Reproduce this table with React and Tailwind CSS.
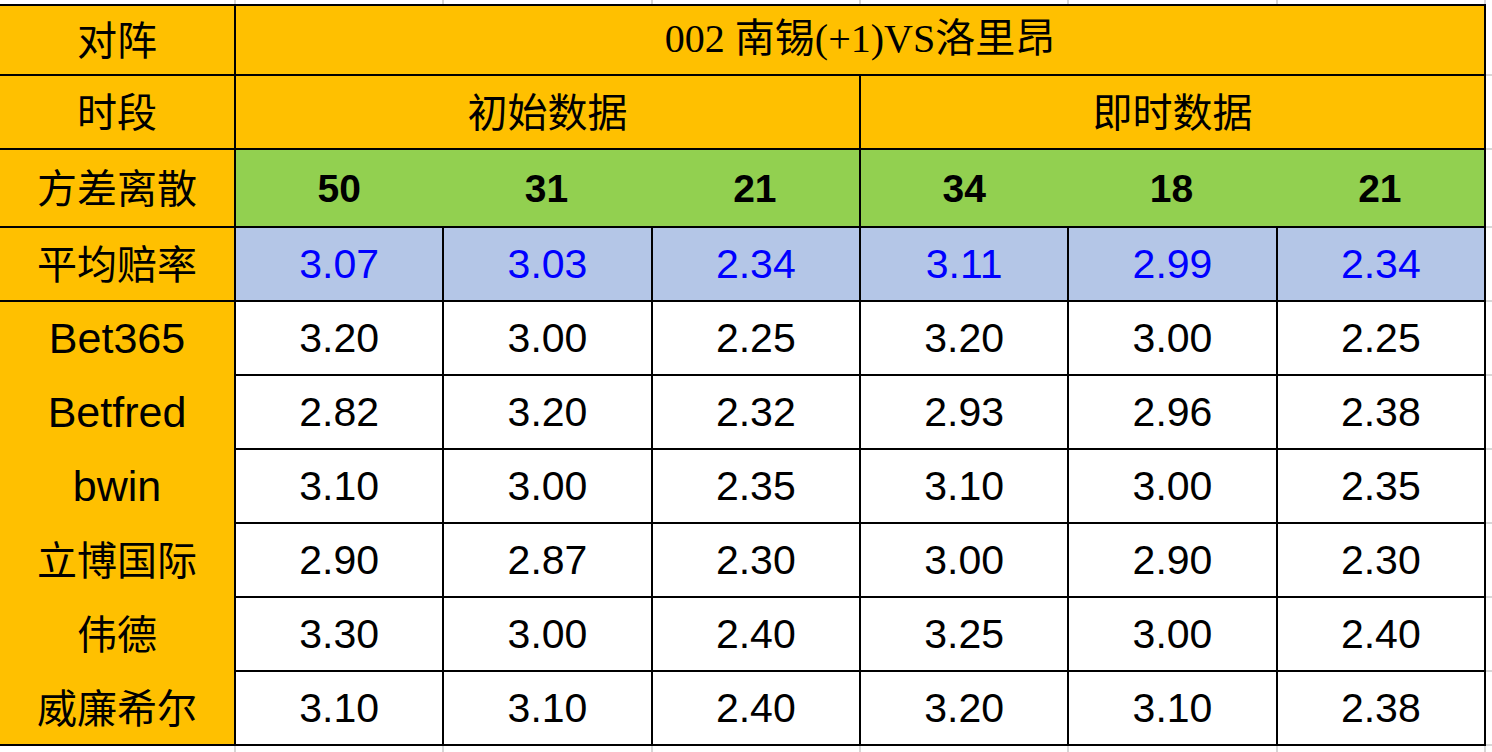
import React from 'react';

const grid = 'grid grid-cols-[234px_repeat(6,minmax(0,1fr))]';
const cjk = "font-['Noto_Sans_CJK_SC',sans-serif] pb-[5px]";
const num = "font-['Liberation_Sans','Noto_Sans_CJK_SC',sans-serif]";

const fangcha = ['50', '31', '21', '34', '18', '21'];
const pingjun = ['3.07', '3.03', '2.34', '3.11', '2.99', '2.34'];

const gongsi = [
    { ming: 'Bet365', latin: true, peilv: ['3.20', '3.00', '2.25', '3.20', '3.00', '2.25'] },
    { ming: 'Betfred', latin: true, peilv: ['2.82', '3.20', '2.32', '2.93', '2.96', '2.38'] },
    { ming: 'bwin', latin: true, peilv: ['3.10', '3.00', '2.35', '3.10', '3.00', '2.35'] },
    { ming: '立博国际', peilv: ['2.90', '2.87', '2.30', '3.00', '2.90', '2.30'] },
    { ming: '伟德', peilv: ['3.30', '3.00', '2.40', '3.25', '3.00', '2.40'] },
    { ming: '威廉希尔', peilv: ['3.10', '3.10', '2.40', '3.20', '3.10', '2.38'] },
];

// 右侧浅灰网格线的分段高度
const youce = [74, 74, 78, 74, 74, 74, 74, 74, 74, 74, 8];

const Biaoqian = ({ children, className = '', latin = false }) => (
    <div
        className={`flex items-center justify-center bg-[#ffc000] leading-none text-black ${latin ? `${num} text-[43px]` : `${cjk} text-[40px]`} ${className}`}
    >
        {children}
    </div>
);

const Wangge = ({ h }) => (
    <div className={`${grid} w-[1486px] border-r-2 border-[#d6d6d6] ${h}`}>
        <div />
        {[0, 1, 2, 3, 4, 5].map((i) => (
            <div key={i} className="border-l-2 border-[#d6d6d6]" />
        ))}
    </div>
);

const App = () => {
    return (
        <div className="flex h-[752px] w-[1492px] overflow-hidden bg-white">
            <div className="flex flex-col">
                <Wangge h="h-[4px]" />

                {/* 表格主体 */}
                <div className="flex w-[1486px] flex-col border-y-2 border-r-2 border-black">
                    {/* 对阵 */}
                    <div className={`${grid} h-[68px] bg-[#ffc000]`}>
                        <Biaoqian>对阵</Biaoqian>
                        <div className="col-span-6 flex items-center justify-center border-l-2 border-black pb-[3px] text-[40px] leading-none text-black font-['Liberation_Serif','Noto_Sans_CJK_SC',serif]">
                            002 南锡(+1)VS洛里昂
                        </div>
                    </div>

                    {/* 时段 */}
                    <div className={`${grid} h-[74px] border-t-2 border-black bg-[#ffc000]`}>
                        <Biaoqian>时段</Biaoqian>
                        <Biaoqian className="col-span-3 border-l-2 border-black">初始数据</Biaoqian>
                        <Biaoqian className="col-span-3 border-l-2 border-black">即时数据</Biaoqian>
                    </div>

                    {/* 方差离散 */}
                    <div className={`${grid} h-[78px] border-t-2 border-black`}>
                        <Biaoqian>方差离散</Biaoqian>
                        {fangcha.map((v, i) => (
                            <div
                                key={i}
                                className={`flex items-center justify-center bg-[#92d050] text-[39px] font-bold leading-none text-black ${num} ${i === 0 || i === 3 ? 'border-l-2 border-black' : ''}`}
                            >
                                {v}
                            </div>
                        ))}
                    </div>

                    {/* 平均赔率 */}
                    <div className={`${grid} h-[74px] border-t-2 border-black`}>
                        <Biaoqian>平均赔率</Biaoqian>
                        {pingjun.map((v, i) => (
                            <div
                                key={i}
                                className={`flex items-center justify-center border-l-2 border-black bg-[#b4c6e7] text-[41px] leading-none text-[#0000ff] ${num}`}
                            >
                                {v}
                            </div>
                        ))}
                    </div>

                    {/* 各公司赔率 */}
                    {gongsi.map((g, r) => (
                        <div key={g.ming} className={`${grid} h-[74px]`}>
                            <Biaoqian
                                latin={g.latin}
                                className={`border-t-2 ${r === 0 ? 'border-black' : 'border-[#ffc000]'}`}
                            >
                                {g.ming}
                            </Biaoqian>
                            {g.peilv.map((v, i) => (
                                <div
                                    key={i}
                                    className={`flex items-center justify-center border-l-2 border-t-2 border-black bg-white text-[41px] leading-none text-black ${num}`}
                                >
                                    {v}
                                </div>
                            ))}
                        </div>
                    ))}
                </div>

                <Wangge h="h-[6px]" />
            </div>

            {/* 右侧网格线 */}
            <div className="flex w-[6px] flex-col">
                {youce.map((h, i) => (
                    <div
                        key={i}
                        className={i === 0 ? '' : 'border-t-2 border-[#d6d6d6]'}
                        style={{ height: h }}
                    />
                ))}
            </div>
        </div>
    );
};

export default App;
